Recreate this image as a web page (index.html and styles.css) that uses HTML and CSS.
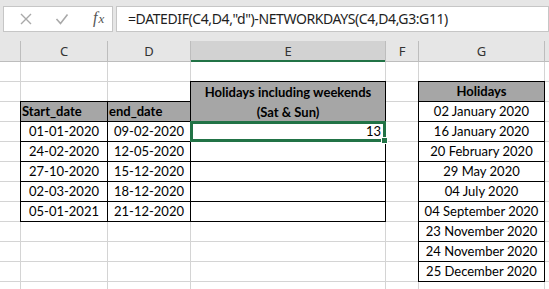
FILE: index.html
```html
<!DOCTYPE html>
<html>
<head>
    <meta charset="UTF-8">
    <title>Holidays between dates</title>
    <link rel="stylesheet" href="styles.css">
</head>
<body>
    <div class="toolbar">
        <div class="fx-box">
            <svg class="tool" width="14" height="14" viewBox="0 0 14 14">
                <path d="M2 2 L12 12 M12 2 L2 12" stroke="#a9a9a9" stroke-width="1.4" fill="none"/>
            </svg>
            <svg class="tool" width="14" height="14" viewBox="0 0 14 14">
                <path d="M1.5 7 L5.5 11.5 L12.5 2.5" stroke="#a9a9a9" stroke-width="1.6" fill="none"/>
            </svg>
            <span class="fx">f<span class="x">x</span></span>
        </div>
        <div class="formula">=DATEDIF(C4,D4,"d")-NETWORKDAYS(C4,D4,G3:G11)</div>
    </div>

    <div class="col-heads">
        <div></div>
        <div>C</div>
        <div>D</div>
        <div class="sel">E</div>
        <div>F</div>
        <div>G</div>
        <div></div>
    </div>

    <div class="sheet">
        <!-- row 1 -->
        <div></div><div></div><div></div><div></div><div></div><div></div><div></div>

        <!-- row 2 -->
        <div></div><div></div><div></div>
        <div class="head boxed merged">Holidays including weekends<br>(Sat &amp; Sun)</div>
        <div></div>
        <div class="head boxed">Holidays</div>
        <div></div>

        <!-- row 3 (E is taken by the merged header) -->
        <div></div>
        <div class="head boxed left">Start_date</div>
        <div class="head boxed left">end_date</div>
        <div></div>
        <div class="boxed center">02 January 2020</div>
        <div></div>

        <!-- row 4 -->
        <div></div>
        <div class="boxed center">01-01-2020</div>
        <div class="boxed center">09-02-2020</div>
        <div class="boxed num active">13</div>
        <div></div>
        <div class="boxed center">16 January 2020</div>
        <div></div>

        <!-- row 5 -->
        <div></div>
        <div class="boxed center">24-02-2020</div>
        <div class="boxed center">12-05-2020</div>
        <div class="boxed"></div>
        <div></div>
        <div class="boxed center">20 February 2020</div>
        <div></div>

        <!-- row 6 -->
        <div></div>
        <div class="boxed center">27-10-2020</div>
        <div class="boxed center">15-12-2020</div>
        <div class="boxed"></div>
        <div></div>
        <div class="boxed center">29 May 2020</div>
        <div></div>

        <!-- row 7 -->
        <div></div>
        <div class="boxed center">02-03-2020</div>
        <div class="boxed center">18-12-2020</div>
        <div class="boxed"></div>
        <div></div>
        <div class="boxed center">04 July 2020</div>
        <div></div>

        <!-- row 8 -->
        <div></div>
        <div class="boxed center">05-01-2021</div>
        <div class="boxed center">21-12-2020</div>
        <div class="boxed"></div>
        <div></div>
        <div class="boxed center">04 September 2020</div>
        <div></div>

        <!-- row 9 -->
        <div></div><div></div><div></div><div></div><div></div>
        <div class="boxed center">23 November 2020</div>
        <div></div>

        <!-- row 10 -->
        <div></div><div></div><div></div><div></div><div></div>
        <div class="boxed center">24 November 2020</div>
        <div></div>

        <!-- row 11 -->
        <div></div><div></div><div></div><div></div><div></div>
        <div class="boxed center">25 December 2020</div>
        <div></div>

        <!-- row 12 -->
        <div></div><div></div><div></div><div></div><div></div><div></div><div></div>
    </div>
</body>
</html>
```

FILE: styles.css
```css
body {
    margin: 0;
    width: 549px;
    height: 289px;
    overflow: hidden;
    background-color: #e6e6e6;
    font-family: Lato, "Liberation Sans", sans-serif;
}

/* formula bar */
.toolbar {
    display: flex;
    height: 41px;
    padding: 6px 0 0 3px;
    box-sizing: border-box;
    gap: 3px;
}

.fx-box,
.formula {
    height: 26px;
    box-sizing: border-box;
    background-color: white;
    border: 1px solid #c6c6c6;
}

.fx-box {
    width: 110px;
    display: flex;
    align-items: center;
    padding-left: 15px;
}

.tool {
    margin-right: 22px;
}

.tool + .tool {
    margin-right: 24px;
}

.fx {
    font-family: "Liberation Serif", serif;
    font-style: italic;
    font-size: 16px;
    color: #555;
    margin-top: -2px;
}

.fx .x {
    font-size: 13px;
    margin-left: 1px;
}

.formula {
    flex: 1;
    padding-left: 11px;
    font-family: "Noto Sans", sans-serif;
    font-size: 14px;
    letter-spacing: -0.4px;
    line-height: 24px;
    color: #1e1e1e;
    white-space: nowrap;
    overflow: hidden;
}

/* column letters */
.col-heads {
    display: grid;
    grid-template-columns: 20px 86px 82px 194px 32px 125px 1fr;
    grid-template-rows: 20px;
    column-gap: 1px;
    padding-bottom: 1px;
    background-color: #bdbdbd;
}

.col-heads div {
    background-color: #e6e6e6;
    text-align: center;
    font-family: "Noto Sans", sans-serif;
    font-size: 13px;
    line-height: 20px;
    color: #333;
}

.col-heads .sel {
    background-color: #d2d2d2;
    box-shadow: 0 1px 0 #217346, inset 0 -1px 0 #217346;
}

/* cells */
.sheet {
    display: grid;
    grid-template-columns: 20px 86px 82px 194px 32px 125px 1fr;
    grid-auto-rows: 19px;
    gap: 1px;
    background-color: #d4d4d4;
}

.sheet div {
    background-color: white;
    font-size: 13px;
    line-height: 19px;
    color: #000;
    white-space: nowrap;
}

.sheet .boxed {
    box-shadow: 0 0 0 1px #000;
}

.sheet .head {
    background-color: #a6a6a6;
    font-weight: bold;
    text-align: center;
}

.sheet .left {
    text-align: left;
    padding-left: 1px;
}

.sheet .center {
    text-align: center;
}

.sheet .num {
    text-align: right;
    padding-right: 4px;
}

.sheet .merged {
    grid-row: span 2;
    line-height: 20px;
}

.sheet .active {
    position: relative;
    box-shadow: 0 0 0 1px #217346, inset 0 0 0 2px #217346;
}

/* fill handle */
.sheet .active::after {
    content: "";
    position: absolute;
    right: -3px;
    bottom: -3px;
    width: 5px;
    height: 5px;
    background-color: #217346;
    border: 1px solid white;
}
```
